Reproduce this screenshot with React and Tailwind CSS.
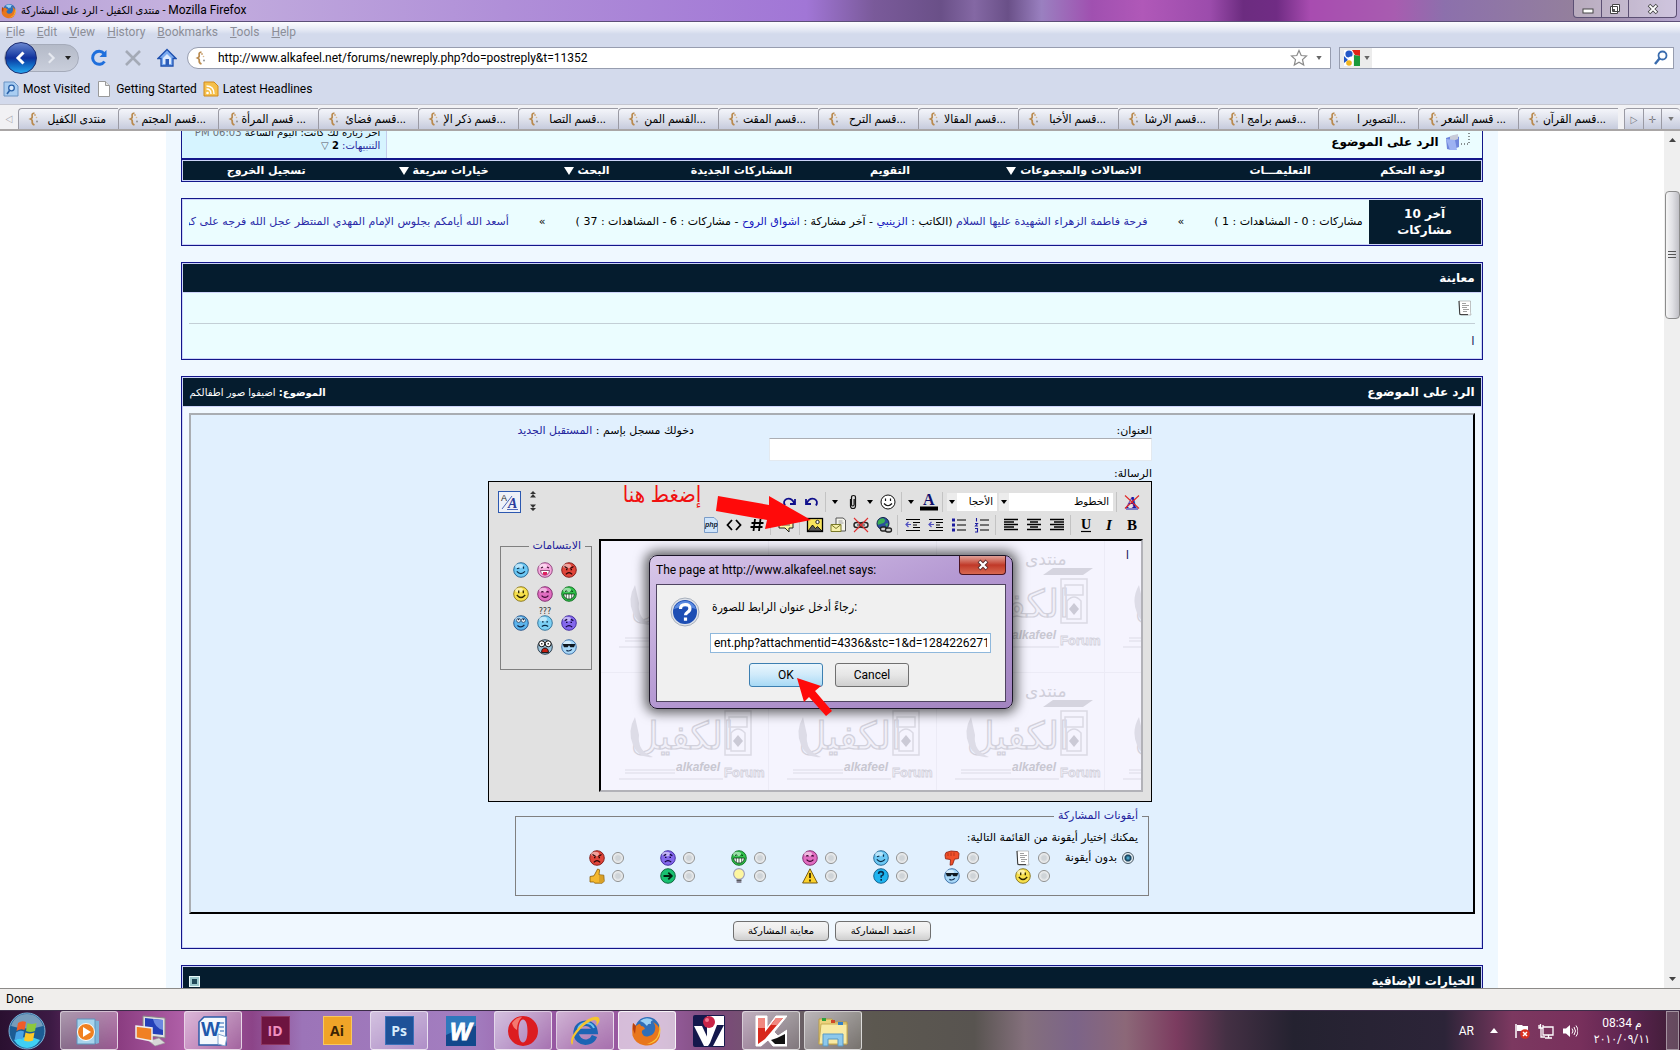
import React, { useState } from 'react';

const menus = ['File', 'Edit', 'View', 'History', 'Bookmarks', 'Tools', 'Help'];

const tabs = [
  'منتدى الكفيل',
  'قسم المجتم...',
  'قسم المرأة ...',
  'قسم فضائ...',
  'قسم ذكر الإ...',
  'قسم التصا...',
  'القسم المن...',
  'قسم المقت...',
  'قسم الترح...',
  'قسم المقالا...',
  'قسم الأخبا...',
  'قسم الارشا...',
  'قسم برامج ا...',
  'التصوير ا...',
  'قسم الشعر ...',
  'قسم القرآن...',
];

const navItems = [
  { label: 'لوحة التحكم' },
  { label: 'التعليمـــات' },
  { label: 'الاتصالات والمجموعات', menu: true },
  { label: 'التقويم' },
  { label: 'المشاركات الجديدة' },
  { label: 'البحث', menu: true },
  { label: 'خيارات سريعة', menu: true },
  { label: 'تسجيل الخروج' },
];

/* ---------- Smileys and post icons ---------- */

const faces = {
  angry: { fill: '#e0453a', edge: '#7c1512' },
  tongue: { fill: '#f5a8dc', edge: '#8a3c78' },
  wink: { fill: '#6cc8f4', edge: '#1d5f8c' },
  grin: { fill: '#2fc24a', edge: '#0c6a1e' },
  blush: { fill: '#e06cc0', edge: '#7a2468' },
  smile: { fill: '#f7e04c', edge: '#83701a' },
  sad: { fill: '#8468ec', edge: '#3a2498' },
  confused: { fill: '#7cd0f4', edge: '#2c6c94' },
  roll: { fill: '#5cb4ec', edge: '#1c4c84' },
  cool: { fill: '#a8d8f8', edge: '#3468a0' },
  shock: { fill: '#9cc4dc', edge: '#203040' },
};

const Smiley = ({ type }) => {
  const { fill, edge } = faces[type];
  return (
    <svg viewBox="0 0 16 16" className="w-4 h-4 shrink-0" fill="none">
      <circle cx="8" cy="8" r="7.3" fill={fill} stroke={edge} strokeWidth="0.9" />
      <ellipse cx="6" cy="4" rx="4" ry="2.3" fill="#fff" opacity="0.5" />
      {type === 'angry' && (
        <path d="M3.5 4.5l3.2 2M12.5 4.5l-3.2 2M5 7.6h1.4M9.6 7.6H11M4.8 12.3q3.2-3.4 6.4 0" stroke="#2c0606" strokeWidth="1.2" />
      )}
      {type === 'tongue' && (
        <>
          <path d="M4 6l2-1M12 6l-2-1" stroke="#401030" strokeWidth="1.2" />
          <path d="M3.5 8.5h9q-.8 4.5-4.5 4.5T3.5 8.5z" fill="#fff" stroke="#602048" strokeWidth="0.7" />
          <path d="M6 10h4v2.500q-2 1.500-4 0z" fill="#e02060" />
        </>
      )}
      {type === 'wink' && (
        <path d="M4 6.8l2.4-.8M10.5 4.6v2.2M3.8 9.4q4 4.4 8.2 0" stroke="#0b2c48" strokeWidth="1.2" />
      )}
      {type === 'grin' && (
        <>
          <path d="M4 5.6q1.2-1.4 2.4 0M9.6 5.6q1.2-1.4 2.4 0" stroke="#063010" strokeWidth="1" />
          <path d="M2.6 8h10.8q-.6 5.2-5.4 5.2T2.6 8z" fill="#fff" stroke="#063010" strokeWidth="0.8" />
          <path d="M5.3 8v4.4M8 8v5M10.7 8v4.4" stroke="#063010" strokeWidth="0.7" />
        </>
      )}
      {type === 'blush' && (
        <path d="M4.3 6.4q1-1.6 2.2 0M9.5 6.4q1-1.6 2.2 0M4.6 9.6q3.4 3.6 6.8 0" stroke="#3a0630" strokeWidth="1.2" />
      )}
      {type === 'smile' && (
        <path d="M5.7 4.6v2.6M10.3 4.6v2.6M3.8 9q4.2 5 8.4 0" stroke="#2e2600" strokeWidth="1.3" />
      )}
      {type === 'sad' && (
        <path d="M3.6 5.6l2.6-1.2M12.4 5.6L9.8 4.4M5 7.4h1.5M9.5 7.4H11M4.8 12.2q3.2-3.2 6.4 0" stroke="#120640" strokeWidth="1.2" />
      )}
      {type === 'confused' && (
        <path d="M5 6.8h1.6M9.4 6.8H11M4.8 11.4q3.2-2 6.4 0" stroke="#0b2c48" strokeWidth="1.2" />
      )}
      {type === 'roll' && (
        <>
          <circle cx="5.6" cy="5.4" r="2" fill="#fff" stroke="#102848" strokeWidth="0.7" />
          <circle cx="10.4" cy="5.4" r="2" fill="#fff" stroke="#102848" strokeWidth="0.7" />
          <path d="M5.6 4v1.2M10.4 4v1.2M4.4 10.4q4 3 7-.6" stroke="#102848" strokeWidth="1.2" />
        </>
      )}
      {type === 'cool' && (
        <>
          <path d="M1.6 5h12.8l-1.4 3.2H9.4L8 6.2 6.6 8.2H3z" fill="#101820" />
          <path d="M5.4 11.4q3 1.6 5.4-1" stroke="#102848" strokeWidth="1.2" />
        </>
      )}
      {type === 'shock' && (
        <>
          <circle cx="4.8" cy="4.8" r="3" fill="#fff" stroke="#111" strokeWidth="1" />
          <circle cx="11.2" cy="4.8" r="3" fill="#fff" stroke="#111" strokeWidth="1" />
          <path d="M4.8 4v1.6M11.2 4v1.6" stroke="#111" strokeWidth="1.2" />
          <path d="M4.6 13.6q0-4.6 3.4-4.6t3.4 4.6z" fill="#c81e10" stroke="#111" strokeWidth="1" />
        </>
      )}
    </svg>
  );
};

const PageIcon = () => (
  <svg viewBox="0 0 16 16" className="w-4 h-4 shrink-0" fill="none">
    <path d="M2 1h11.5v11.5L14 15H4L2.5 13z" fill="#fff" stroke="#9a9a9a" strokeWidth="0.6" />
    <path d="M2 1l.8 13.6H11" stroke="#222" strokeWidth="0.9" />
    <path d="M5 3.5h4M5 5.5h7M5 7.5h5M6 9.5h6M6 11.5h4" stroke="#888" strokeWidth="0.8" />
  </svg>
);

const ThumbIcon = ({ down }) => (
  <svg viewBox="0 0 16 16" className="w-4 h-4 shrink-0">
    <path
      d={
        down
          ? 'M2 2.5L7 1l6.5.6 1.5 2-.5 5-4 .6-2 5.6-2.4.4.4-5.6L1.5 8.8 1 5z'
          : 'M1 8.5l4-.7L8.6 1l2 .8-.6 5 4.8.4.4 6-2 2H6l-1.6-1.2H1z'
      }
      fill={down ? '#f0502a' : '#f4b82e'}
      stroke={down ? '#8c1c0a' : '#8a5c06'}
      strokeWidth="0.8"
    />
    <path
      d={down ? 'M4 3v3M7 2.5V6M10 2.5V6' : 'M10 9h4.6M10 11h4.6M10 13h4'}
      stroke={down ? '#a02c14' : '#a8741a'}
      strokeWidth="0.7"
    />
  </svg>
);

const QuestionIcon = () => (
  <svg viewBox="0 0 16 16" className="w-4 h-4 shrink-0">
    <circle cx="8" cy="8" r="7.3" fill="#1eb4f0" stroke="#0c5884" strokeWidth="0.9" />
    <path d="M5.6 6q0-2.4 2.4-2.4T10.4 6Q10.4 7.2 8.2 8v1.8M8.2 11v1.8" stroke="#083050" strokeWidth="1.6" fill="none" />
  </svg>
);

const WarningIcon = () => (
  <svg viewBox="0 0 16 16" className="w-4 h-4 shrink-0">
    <path d="M8 .8L15.4 15H.6z" fill="#fcd22c" stroke="#6a4c08" strokeWidth="0.9" strokeLinejoin="round" />
    <path d="M8 5v5M8 11.6v1.8" stroke="#201800" strokeWidth="1.6" />
  </svg>
);

const BulbIcon = () => (
  <svg viewBox="0 0 16 16" className="w-4 h-4 shrink-0">
    <circle cx="8" cy="6" r="5.4" fill="#fdf6a0" stroke="#9a9ab8" strokeWidth="1.1" />
    <path d="M5.6 11h4.8v4H5.6z" fill="#8c8c9c" />
    <path d="M5.6 12.6h4.8" stroke="#444" strokeWidth="0.8" />
  </svg>
);

const GoIcon = () => (
  <svg viewBox="0 0 16 16" className="w-4 h-4 shrink-0">
    <circle cx="8" cy="8" r="7.3" fill="#18c070" stroke="#0a5c34" strokeWidth="0.9" />
    <path d="M3.5 8h8M8.3 4.6L11.8 8l-3.5 3.4" stroke="#022010" strokeWidth="1.8" fill="none" />
  </svg>
);

/* ---------- Browser chrome ---------- */

const SiteIcon = () => (
  <svg viewBox="0 0 14 14" className="w-3.5 h-3.5 shrink-0" fill="none">
    <path d="M7.5 1Q4.500 1.500 5.200 4.400 5.600 6 3.500 7q2.300 1 1.700 3Q5 12 7.500 13" stroke="#b98a4e" strokeWidth="1.7" />
    <circle cx="8" cy="3" r="0.9" fill="#c8a070" />
    <circle cx="9.500" cy="5.500" r="0.8" fill="#d9b98c" />
    <circle cx="10" cy="9.500" r="0.9" fill="#8a8a8a" />
  </svg>
);

const FirefoxIcon = ({ className }) => (
  <svg viewBox="0 0 32 32" className={className}>
    <circle cx="16.500" cy="14.500" r="12.500" fill="#2f6fb8" />
    <path d="M9 6q6-5 13-1-3 1-2 4-3-1-4 2-3-4-7-5z" fill="#9ad0f4" />
    <path d="M2 8l3 3q2-2 4-2l1 2q3 0 4 3-4 1-3 4 2 5 7 3 5-1 6-6 1-5-2-8 6 3 7 9 1 7-4 11.500-6 4.500-13 2.500-8-2-10.500-9.500Q.5 14 2 8z" fill="#e8761c" />
    <path d="M28 9q3 6 0 12-4 8-12 8 9-3 11-9 2-5 1-11z" fill="#fbc93a" />
    <path d="M2 8l3 3-1 8q-3-5-2-11z" fill="#b8400e" />
  </svg>
);

const TitleBar = () => (
  <header className="flex items-center h-[22px] shrink-0 pl-px border-b border-[#5c4f78] bg-[linear-gradient(90deg,#b7a2d6_0%,#c4b0de_10%,#b08fd8_30%,#a176d6_48%,#7a5a9a_52%,#6a5088_56%,#8468a4_58%,#6a5088_60%,#9a80c0_62%,#a050b0_65%,#b058b8_68%,#9c4cac_72%,#6c2c80_74%,#702c84_76%,#a84cb0_78%,#a85cb0_83%,#8c70ac_86%,#94809c_94%,#b7a8d0_100%)]">
    <FirefoxIcon className="w-4 h-4 mr-1" />
    <h1 className="text-[11px] leading-5 text-black">
      منتدى الكفيل - الرد على المشاركة - <span className="text-[12px]">Mozilla Firefox</span>
    </h1>
    <div className="ml-auto mr-[3px] self-start flex h-[18px] rounded-b border border-t-0 border-[#5c5074] bg-white/35 divide-x divide-[#5c5074]">
      <button type="button" aria-label="Minimize" className="w-[28px] flex items-center justify-center">
        <svg viewBox="0 0 12 10" className="w-3 h-2.5"><rect x="1" y="5" width="10" height="4" fill="#fff" stroke="#444" /></svg>
      </button>
      <button type="button" aria-label="Restore" className="w-[27px] flex items-center justify-center">
        <svg viewBox="0 0 12 12" className="w-3 h-3"><path d="M3.5 1.5h7v7h-7zM1.5 3.5h7v7h-7z" fill="#fff" stroke="#444" /><path d="M4 6h2v2H4z" fill="#555" /></svg>
      </button>
      <button type="button" aria-label="Close" className="w-[47px] flex items-center justify-center">
        <svg viewBox="0 0 12 12" className="w-3 h-3"><path d="M2 2l8 8M10 2l-8 8" stroke="#444" strokeWidth="3.6" /><path d="M2.5 2.5l7 7M9.5 2.5l-7 7" stroke="#fff" strokeWidth="1.8" /></svg>
      </button>
    </div>
  </header>
);

const NavigationBar = () => (
  <div className="flex items-center h-8 px-1 pr-[6px]">
    <div className="flex items-center w-[75px] h-7 rounded-full bg-gradient-to-b from-[#b4bac8] to-[#c9cedb] border border-[#a5abba]">
      <button type="button" aria-label="Back" className="w-8 h-8 shrink-0 rounded-full border border-[#1c2c70] bg-gradient-to-b from-[#6a86d0] via-[#10309c] to-[#28a8f0] flex items-center justify-center">
        <svg viewBox="0 0 16 16" className="w-4 h-4"><path d="M10.5 2.5L5 8l5.5 5.5" stroke="#fff" strokeWidth="3" fill="none" /></svg>
      </button>
      <button type="button" aria-label="Forward" className="flex-1 flex items-center justify-center">
        <svg viewBox="0 0 16 16" className="w-3.5 h-3.5"><path d="M5.5 2.5L11 8l-5.5 5.5" stroke="#e6e9f0" strokeWidth="2.5" fill="none" /></svg>
      </button>
      <svg viewBox="0 0 8 6" className="w-2 h-1.5 mr-1.5"><path d="M1 1h6L4 5z" fill="#222" /></svg>
    </div>
    <button type="button" aria-label="Reload" className="ml-2.5">
      <svg viewBox="0 0 20 20" className="w-5 h-5"><path d="M15.5 13.500A6.500 6.500 0 1 1 15 5.500" stroke="#1f6fdc" strokeWidth="3" fill="none" /><path d="M17.500 2v7h-7z" fill="#1f6fdc" /></svg>
    </button>
    <button type="button" aria-label="Stop" className="ml-3.5">
      <svg viewBox="0 0 20 20" className="w-5 h-5"><path d="M3 3l14 14M17 3L3 17" stroke="#a4aab6" strokeWidth="2.6" /></svg>
    </button>
    <button type="button" aria-label="Home" className="ml-3.5">
      <svg viewBox="0 0 20 20" className="w-5 h-5"><path d="M10 1.5L1 10.5h3V18h12v-7.500h3z" fill="#7aaaf0" stroke="#1d4fae" strokeWidth="1.3" /><path d="M6 10l4-4 4 4v6H6z" fill="#dce9fc" /><path d="M8.5 11h3.500v6H8.500z" fill="#2c5cb8" /></svg>
    </button>
    <div className="flex-1 flex items-center h-[22px] ml-2.5 pl-1.5 bg-white border border-[#979daf] rounded-l-full">
      <SiteIcon />
      <input
        aria-label="Location"
        defaultValue="http://www.alkafeel.net/forums/newreply.php?do=postreply&t=11352"
        className="flex-1 ml-2.5 text-[12px] leading-5 text-black outline-none bg-transparent"
      />
      <svg viewBox="0 0 18 18" className="w-[18px] h-[18px]"><path d="M9 1.5l2.2 5 5.300.5-4 3.600 1.200 5.400L9 13.200 4.300 16l1.200-5.400-4-3.600 5.300-.5z" fill="#fff" stroke="#8a8a8a" strokeWidth="1.2" /></svg>
      <svg viewBox="0 0 8 6" className="w-1.5 h-1 mx-2"><path d="M0 0h8L4 6z" fill="#666" /></svg>
    </div>
    <div className="w-[335px] flex items-center h-[22px] ml-2 bg-white border border-[#979daf]">
      <div className="flex items-center h-full w-8 pl-1 bg-[#ececec]">
        <svg viewBox="0 0 16 16" className="w-4 h-4">
          <path d="M0 0h9v16H0z" fill="#fff" />
          <path d="M8 0h8v6l-5-1z" fill="#e02418" />
          <path d="M10 5l6 1v10h-6z" fill="#1a9a3c" />
          <circle cx="5" cy="4" r="3.6" fill="#2458c8" />
          <path d="M0 6l4 4-4 3z" fill="#2458c8" />
          <circle cx="7" cy="9" r="2.6" fill="#fff" />
          <circle cx="5" cy="13" r="2.8" fill="#f0b420" />
        </svg>
        <svg viewBox="0 0 8 6" className="w-1.5 h-1 ml-1"><path d="M0 0h8L4 6z" fill="#666" /></svg>
      </div>
      <input aria-label="Search" className="flex-1 outline-none bg-transparent text-[12px]" />
      <svg viewBox="0 0 16 16" className="w-4 h-4 mr-1"><circle cx="9.5" cy="5.5" r="4" fill="none" stroke="#3a6cae" strokeWidth="1.8" /><path d="M6.5 8.5L2 14" stroke="#3a6cae" strokeWidth="2.4" /></svg>
    </div>
  </div>
);

const BookmarksBar = () => (
  <div className="flex items-center h-[30px] pl-[3px] text-[12px] text-black">
    <a href="#visited" className="flex items-center gap-1">
      <svg viewBox="0 0 16 16" className="w-4 h-4"><path d="M1 1h10l4 4v10H1z" fill="#a9cdf2" stroke="#6a94c4" /><circle cx="8.5" cy="7" r="2.8" fill="#dbeafb" stroke="#2860a8" strokeWidth="1.3" /><path d="M6.5 9.5L4 13" stroke="#2860a8" strokeWidth="1.6" /></svg>
      Most Visited
    </a>
    <a href="#started" className="flex items-center gap-1 ml-1.5">
      <svg viewBox="0 0 16 16" className="w-4 h-4"><path d="M2.5.5h7l4 4v11h-11z" fill="#fff" stroke="#9a9a9a" /><path d="M9.5.5v4h4" fill="#e4e4e4" stroke="#9a9a9a" /></svg>
      Getting Started
    </a>
    <a href="#headlines" className="flex items-center gap-1 ml-1.5">
      <svg viewBox="0 0 16 16" className="w-4 h-4"><path d="M1 1h10l4 4v10H1z" fill="#f5c04c" stroke="#d08a1c" /><circle cx="4.5" cy="12" r="1.3" fill="#fff" /><path d="M3.5 8q4.500 0 4.500 5M3.500 5q7.500 0 7.500 8" stroke="#fff" strokeWidth="1.4" fill="none" /></svg>
      Latest Headlines
    </a>
  </div>
);

const stripButton = 'flex-1 flex items-center justify-center border-l border-[#9a9aa4]';

const TabStrip = () => (
  <div className="flex items-stretch h-[27px] pt-[3px] bg-[#f1f1f4] border-t border-[#c4c6d0] border-b-2 border-b-[#a9a6a6]">
    <button type="button" aria-label="Scroll left" className="w-[18px] shrink-0 text-[10px] text-[#a8a8b0]">◁</button>
    <div role="tablist" className="flex-1 flex min-w-0">
      {tabs.map((tab) => (
        <button
          key={tab}
          type="button"
          role="tab"
          className="flex-1 min-w-0 flex items-center pl-2 pr-3 border-l border-t border-[#9a9aa4] rounded-tl-sm bg-gradient-to-b from-[#f4f5fa] via-[#dfe2ec] via-50% to-[#c6cbdd]"
        >
          <SiteIcon />
          <span className="flex-1 text-right text-[12px] leading-5 text-black whitespace-nowrap">{tab}</span>
        </button>
      ))}
    </div>
    <div className="flex w-[56px] ml-1.5 shrink-0 rounded-t border-t border-[#9a9aa4] bg-gradient-to-b from-[#f4f5fa] to-[#c6cbdd] text-[10px] text-[#77777f]">
      <button type="button" aria-label="Scroll right" className={stripButton}>▷</button>
      <button type="button" aria-label="New tab" className={stripButton}>✛</button>
      <button type="button" aria-label="List tabs" className={stripButton}>
        <svg viewBox="0 0 8 6" className="w-1.5 h-1"><path d="M0 0h8L4 6z" fill="#777" /></svg>
      </button>
    </div>
  </div>
);

/* ---------- Forum page ---------- */

const Panel = ({ className = '', children }) => (
  <section className={`border border-[#13168a] bg-[#cdd3f8] p-px ${className}`}>{children}</section>
);

const PanelHeader = ({ title, children }) => (
  <div className="flex items-center justify-between h-7 px-1.5 mb-px bg-[#051c2e] text-white">
    <h2 className="text-[12px] font-bold">{title}</h2>
    {children}
  </div>
);

const Breadcrumb = () => (
  <div className="flex items-end justify-between h-7 border-x border-b border-[#13168a] bg-[#ebfdff] overflow-hidden">
    <div className="flex items-center gap-1.5 pr-[11px] pb-[7px]">
      <svg viewBox="0 0 26 18" className="w-[26px] h-[18px]">
        <path d="M24 0v11H13" stroke="#222" strokeDasharray="1 2" fill="none" />
        <path d="M1 5l9-3 4 2v10l-8 3-4-1z" fill="#6f86dc" />
        <path d="M5 3l8-2v5l-8 3z" fill="#c8ccd8" />
        <path d="M1 6l9 1 2 10H5z" fill="#9db2f2" />
      </svg>
      <span className="text-[12px] leading-4 font-bold text-black">الرد على الموضوع</span>
    </div>
    <div className="w-[205px] pt-1 pb-1.5 px-1.5 bg-[#d6f4ff] border-r border-[#c4ccec] text-[10px] leading-[13px] text-black whitespace-nowrap">
      <p>
        آخر زيارة لك كانت: اليوم الساعة <span className="text-[#6b7078]">06:03 PM</span>
      </p>
      <p>
        <a href="#alerts" className="text-[#22229c]">التنبيهات:</a> <b>2</b> <span className="text-[#556]">▽</span>
      </p>
    </div>
  </div>
);

const ForumNav = () => (
  <Panel>
    <nav className="table w-full h-[19px] bg-[#051c2e] text-white text-[11px] font-bold leading-[17px]">
      {navItems.map((item) => (
        <a key={item.label} href="#nav" className="table-cell text-center align-middle whitespace-nowrap">
          {item.label}
          {item.menu && (
            <svg viewBox="0 0 10 8" className="inline w-2.5 h-2 mr-1"><path d="M0 0h10L5 8z" fill="#fff" /></svg>
          )}
        </a>
      ))}
    </nav>
  </Panel>
);

const LatestPosts = () => (
  <Panel className="mt-4">
    <div className="flex h-11">
      <h2 className="w-28 shrink-0 flex items-center justify-center text-center bg-[#051c2e] text-white text-[12px] leading-4 font-bold">
        آخر 10
        <br />
        مشاركات
      </h2>
      <div className="flex-1 flex items-center px-1.5 bg-[#ebfdff]">
        <div className="flex-1 w-0 flex gap-[30px] overflow-hidden whitespace-nowrap text-[11px] leading-5 text-black">
          <span>مشاركات : 0 - المشاهدات : 1 )</span>
          <span>»</span>
          <span>
            <a href="#t1" className="text-[#2a2aa8]">فرحة فاطمة الزهراء الشهيدة عليها السلام</a> (الكاتب :{' '}
            <a href="#u1" className="text-[#1414c0]">الزينبي</a> - آخر مشاركة :{' '}
            <a href="#u2" className="text-[#1414c0]">اشواق الروح</a> - مشاركات : 6 - المشاهدات : 37 )
          </span>
          <span>»</span>
          <a href="#t2" className="text-[#2a2aa8]">أسعد الله أيامكم بجلوس الإمام المهدي المنتظر عجل الله فرجه على كرس</a>
        </div>
      </div>
    </div>
  </Panel>
);

const Preview = () => (
  <Panel className="mt-4">
    <PanelHeader title="معاينة" />
    <div className="px-1.5 bg-[#ebfdff]">
      <div className="flex items-center h-[31px] px-0.5 border-b border-[#c3cfd6]">
        <PageIcon />
      </div>
      <p className="h-[34px] text-[12px] leading-[34px] text-[#22225c]">ا</p>
    </div>
  </Panel>
);

const Separator = () => <span className="w-px h-5 mr-[3px] ml-[2px] bg-[#c3c3c3]" />;

const Tool = ({ label, children }) => (
  <button type="button" aria-label={label} className="w-[23px] h-[23px] flex items-center justify-center">
    <svg viewBox="0 0 18 18" className="w-[18px] h-[18px] [direction:ltr]" fill="none">{children}</svg>
  </button>
);

const Caret = ({ label }) => (
  <button type="button" aria-label={label} className="w-3 h-[23px] flex items-center justify-center">
    <svg viewBox="0 0 6 4" className="w-1.5 h-1"><path d="M0 0h6L3 4z" fill="#000" /></svg>
  </button>
);

const ToolSelect = ({ label, value, width }) => (
  <div className={`flex items-center h-[18px] mx-px bg-white ${width}`}>
    <select aria-label={label} className="flex-1 min-w-0 appearance-none pr-1 text-[10px] leading-[18px] text-black bg-transparent outline-none">
      <option>{value}</option>
    </select>
    <span className="w-[10px] h-full flex items-center justify-center bg-[#ececec]">
      <svg viewBox="0 0 6 4" className="w-1.5 h-1"><path d="M0 0h6L3 4z" fill="#000" /></svg>
    </span>
  </div>
);

const EditorToolbar = () => (
  <div className="flex">
    <div className="flex-1 pr-2">
      <div className="flex items-center h-[23px]">
        <Tool label="إزالة التنسيق">
          <text x="3" y="15" fontFamily="Liberation Serif" fontSize="17" fontStyle="italic" fontWeight="bold" fill="#1a1aa8">A</text>
          <path d="M2 2.5l14 13M16 2.5l-14 13" stroke="#e02828" strokeWidth="1.1" />
          <path d="M3 16h12" stroke="#1a1aa8" />
        </Tool>
        <Separator />
        <ToolSelect label="الخطوط" value="الخطوط" width="w-[114px]" />
        <ToolSelect label="الأحجام" value="الأحجا" width="w-[50px]" />
        <Separator />
        <Tool label="لون الخط">
          <text x="3" y="12" fontFamily="Liberation Serif" fontSize="16" fontWeight="bold" fill="#10106c">A</text>
          <path d="M0 13.5h18v4H0z" fill="#000" />
        </Tool>
        <Caret label="الألوان" />
        <Separator />
        <Tool label="ابتسامات">
          <circle cx="9" cy="9" r="7" fill="#fff" stroke="#111" />
          <path d="M6.5 5.5v2.500M11.500 5.500v2.500M5 10.500q4 4.500 8 0" stroke="#111" strokeWidth="1.2" />
        </Tool>
        <Caret label="المزيد" />
        <Tool label="مرفقات">
          <path d="M6.5 6v7q0 2.500 2.500 2.500t2.500-2.500V4.500q0-2-2-2t-2 2v7q0 1.500 1.300 1.500t1.300-1.500V6" stroke="#111" strokeWidth="1.2" />
        </Tool>
        <Caret label="إدارة المرفقات" />
        <Separator />
        <Tool label="تراجع">
          <path d="M3 6v5h5M3.5 10.500q3-6 8-4.500 4 2 1.500 6.500" stroke="#10108c" strokeWidth="1.8" />
        </Tool>
        <Tool label="إعادة">
          <path d="M15 6v5h-5M14.5 10.500q-3-6-8-4.500-4 2-1.500 6.500" stroke="#10108c" strokeWidth="1.8" />
        </Tool>
      </div>
      <div className="flex items-center h-[23px]">
        <Tool label="عريض">
          <text x="4" y="14" fontFamily="Liberation Serif" fontSize="15" fontWeight="bold" fill="#000">B</text>
        </Tool>
        <Tool label="مائل">
          <text x="6" y="14" fontFamily="Liberation Serif" fontSize="15" fontWeight="bold" fontStyle="italic" fill="#000">I</text>
        </Tool>
        <Tool label="تحته خط">
          <text x="4" y="13" fontFamily="Liberation Serif" fontSize="14" fontWeight="bold" fill="#000">U</text>
          <path d="M4 15.5h10" stroke="#000" strokeWidth="1.2" />
        </Tool>
        <Separator />
        <Tool label="محاذاة لليمين">
          <path d="M2 3.5h14M6 6h10M2 8.5h14M6 11h10M2 13.5h14" stroke="#000" strokeWidth="1.3" />
        </Tool>
        <Tool label="توسيط">
          <path d="M2 3.5h14M5 6h8M2 8.5h14M5 11h8M2 13.5h14" stroke="#000" strokeWidth="1.3" />
        </Tool>
        <Tool label="محاذاة لليسار">
          <path d="M2 3.5h14M2 6h10M2 8.5h14M2 11h10M2 13.5h14" stroke="#000" strokeWidth="1.3" />
        </Tool>
        <Separator />
        <Tool label="قائمة مرقمة">
          <path d="M7 4h9M7 9h9M7 14h9" stroke="#000" />
          <path d="M3.5 2v3.500M2 7.500h2.500L2.500 10h2.500M2 12.500h2.500V16H2" stroke="#1c1ca0" strokeWidth="1.1" />
        </Tool>
        <Tool label="قائمة نقطية">
          <path d="M7 4h9M7 9h9M7 14h9" stroke="#000" />
          <path d="M2 2.5h3v3H2zM2 7.5h3v3H2zM2 12.5h3v3H2z" fill="#1c1ca0" />
        </Tool>
        <Tool label="زيادة المسافة">
          <path d="M2 3.5h14M9 6.5h7M9 9h4M9 11.5h7M2 14.5h14" stroke="#000" strokeWidth="1.2" />
          <path d="M7 8.500H2M4.500 6L2 8.500 4.500 11" stroke="#5050c0" strokeWidth="1.2" />
        </Tool>
        <Tool label="إنقاص المسافة">
          <path d="M2 3.5h14M9 6.5h7M9 9h4M9 11.5h7M2 14.5h14" stroke="#000" strokeWidth="1.2" />
          <path d="M7 8.500H2M4.500 6L2 8.500 4.500 11" stroke="#5050c0" strokeWidth="1.2" />
        </Tool>
        <Separator />
        <Tool label="إدراج رابط">
          <circle cx="8" cy="7.5" r="6" fill="#2a4e9c" stroke="#0c1c48" />
          <path d="M5 3q4-2 5 1 0 3-3 3.500T3 9Q1.500 5 5 3zM10 8l3-1-1 4z" fill="#3cb054" />
          <rect x="5.5" y="11" width="6" height="4" rx="2" stroke="#222" strokeWidth="1.3" fill="#ccc" />
          <rect x="10.5" y="12" width="6" height="4" rx="2" stroke="#222" strokeWidth="1.3" fill="#ccc" />
        </Tool>
        <Tool label="إزالة الرابط">
          <rect x="2" y="6.5" width="7" height="5" rx="2.5" stroke="#222" strokeWidth="1.4" />
          <rect x="8" y="6.5" width="8" height="5" rx="2.5" stroke="#222" strokeWidth="1.4" />
          <path d="M5 9h8" stroke="#222" />
          <path d="M2 2l14 14M16 2L2 16" stroke="#e03030" strokeWidth="1.1" />
        </Tool>
        <Tool label="بريد">
          <path d="M7 2h7l2.500 2v11H7z" fill="#f4f4ec" stroke="#555" />
          <path d="M9.500 5h4M9.500 7h5" stroke="#888" strokeWidth="0.8" />
          <path d="M2 8.500h10v7H2z" fill="#f6f0a8" stroke="#7a7a28" />
          <path d="M2 8.500l5 4 5-4" stroke="#7a7a28" />
        </Tool>
        <Tool label="إدراج صورة">
          <rect x="1.5" y="2.5" width="15" height="13" fill="#f8e45c" stroke="#000" strokeWidth="1.3" />
          <circle cx="11.5" cy="6" r="1.7" stroke="#222" fill="#fff" />
          <path d="M2 15l4.500-6 3 3.500 2-2L16 15z" fill="#555" stroke="#000" strokeWidth="0.8" />
        </Tool>
        <Separator />
        <Tool label="اقتباس">
          <path d="M2 3h14v9h-4v4l-4-4H2z" fill="#fcf4a0" stroke="#222" />
          <path d="M5 6h8M5 9h8" stroke="#555" />
        </Tool>
        <Separator />
        <Tool label="كود">
          <path d="M7 3L5.500 15M12.500 3L11 15M3.500 7h12M2.500 11h12" stroke="#000" strokeWidth="1.8" />
        </Tool>
        <Tool label="HTML">
          <path d="M7 4L2.500 9 7 14M11 4l4.500 5-4.500 5" stroke="#000" strokeWidth="1.8" />
        </Tool>
        <Tool label="PHP">
          <path d="M2.500 1.500H12L15.500 5v11.500h-13z" fill="#cfe4fa" stroke="#7a9cc8" />
          <text x="3" y="11" fontFamily="Liberation Sans" fontSize="7" fontWeight="bold" fontStyle="italic" fill="#112233">php</text>
        </Tool>
      </div>
    </div>
    <div className="flex items-start gap-2 pl-[9px] pt-px">
      <div className="flex flex-col gap-1">
        <button type="button" aria-label="تصغير"><svg viewBox="0 0 8 8" className="w-2 h-2"><path d="M4 0l3 3H1zM4 3l3 3.500H1z" fill="#333" /></svg></button>
        <button type="button" aria-label="تكبير"><svg viewBox="0 0 8 8" className="w-2 h-2"><path d="M4 8L1 5h6zM4 5L1 1.500h6z" fill="#333" /></svg></button>
      </div>
      <button type="button" aria-label="نوع المحرر" className="w-[23px] h-[22px] bg-[#eef1f8] border border-[#2c58b0] flex items-center justify-center">
        <svg viewBox="0 0 20 18" className="w-5 h-[18px] [direction:ltr]">
          <text x="1" y="8" fontFamily="Liberation Sans" fontSize="9" fill="#222">A</text>
          <text x="8" y="15" fontFamily="Liberation Serif" fontSize="14" fontWeight="bold" fontStyle="italic" fill="#2a3c9c">A</text>
          <path d="M2 16L12 3M7 16.500h11" stroke="#3c58b0" strokeWidth="0.9" />
        </svg>
      </button>
    </div>
  </div>
);

const Watermark = () => (
  <svg viewBox="0 0 168 132" className="w-[168px] h-[132px] shrink-0 [direction:ltr]" fill="none">
    <path d="M167.5 0v132M0 131.5h168" stroke="#ecebf6" />
    <text x="88" y="24" fontFamily="DejaVu Sans" fontSize="17" fill="#d0cfda">منتدى</text>
    <text x="30" y="76" fontFamily="DejaVu Sans" fontSize="38" fill="#f1f0f9" stroke="#d2d1dc" strokeWidth="1.2">الكفيل</text>
    <text x="75" y="98" fontFamily="Liberation Sans" fontSize="12" fontWeight="bold" fontStyle="italic" fill="#c8c7d1">alkafeel</text>
    <text x="123" y="104" fontFamily="Liberation Sans" fontSize="13" fontWeight="bold" fill="#f3f2fa" stroke="#d2d1dc" strokeWidth="0.8">Forum</text>
    <path d="M106 34l10-7h40l-10 7z" fill="#d5d4df" />
    <path d="M124 38h26v44h-26zM128 44h18v10h-18zM130 60q7-8 14 0v18h-14z" stroke="#dad9e4" strokeWidth="1.5" />
    <path d="M137 62l5 6-5 6-5-6z" fill="#cbcad6" />
    <path d="M24 97h50M24 100h50M18 106h104" stroke="#dcdbe6" />
    <path d="M34 44q-8 14-2 28t20 12q-16-6-14-22z" fill="#dddce7" />
  </svg>
);

const smileyRows = [
  { types: ['angry', 'tongue', 'wink'], height: 'h-6' },
  { types: ['grin', 'blush', 'smile'], height: 'h-6' },
  { types: ['sad', 'confused', 'roll'], height: 'h-[29px]' },
  { types: ['cool', 'shock'], height: 'h-6' },
];

const Editor = () => (
  <div className="w-[664px] border border-black bg-[#e1e1e1] pt-2 pb-[9px]">
    <EditorToolbar />
    <div className="flex items-start gap-[7px] mt-[3px] pr-2 pl-[11px]">
      <div className="flex-1 grid h-[253px] border-2 border-t-black border-l-black border-r-[#b2b2b8] border-b-[#b2b2b8] bg-[#f5f4fe] overflow-hidden">
        <div className="[grid-area:1/1] w-0 min-w-full h-[249px] overflow-hidden" dir="ltr">
          {[0, 1].map((row) => (
            <div key={row} className="flex">
              {[0, 1, 2, 3].map((col) => (
                <Watermark key={col} />
              ))}
            </div>
          ))}
        </div>
        <textarea
          id="message"
          defaultValue="ا"
          className="[grid-area:1/1] relative resize-none bg-transparent outline-none px-3 py-1.5 text-[12px] leading-4 text-[#22225c]"
        />
      </div>
      <fieldset className="w-[92px] h-[131px] border border-[#808080] pt-px pr-3.5 text-[11px]">
        <legend className="-mr-2 px-1 leading-[14px] text-[#22229c]">الابتسامات</legend>
        {smileyRows.map((row) => (
          <div key={row.types[0]} className={`flex gap-2 items-end ${row.height}`}>
            {row.types.map((type) => (
              <button key={type} type="button" aria-label={type} className="relative">
                {type === 'confused' && (
                  <span className="absolute -top-2 inset-x-0 text-center text-[8px] leading-[10px] text-[#333]">???</span>
                )}
                <Smiley type={type} />
              </button>
            ))}
          </div>
        ))}
      </fieldset>
    </div>
  </div>
);

const postIcons = [
  <PageIcon />,
  <ThumbIcon down />,
  <Smiley type="wink" />,
  <Smiley type="blush" />,
  <Smiley type="grin" />,
  <Smiley type="sad" />,
  <Smiley type="angry" />,
  <Smiley type="smile" />,
  <Smiley type="cool" />,
  <QuestionIcon />,
  <WarningIcon />,
  <BulbIcon />,
  <GoIcon />,
  <ThumbIcon />,
];

const radioStyle =
  'appearance-none w-3 h-3 shrink-0 rounded-full border border-[#8e8f8f] bg-[radial-gradient(circle,#cfd4d8_30%,#f6f6f6_75%)] checked:border-[#4a5a66] checked:bg-[radial-gradient(circle,#58c4ec_0%,#123c58_40%,#e8f0f4_60%)]';

const PostIcons = ({ selected, onSelect }) => (
  <fieldset className="mt-[7px] mx-[3px] border border-[#808080] pt-2 pb-2.5 px-2.5 text-[11px] leading-[14px] text-black">
    <legend className="-mr-1 px-1 text-[#22229c]">أيقونات المشاركة</legend>
    <p>يمكنك إختيار أيقونة من القائمة التالية:</p>
    <div className="flex mt-1">
      <label className="w-[88px] h-[18px] flex items-center gap-[5px] pr-1 whitespace-nowrap">
        <input type="radio" name="icon" checked={selected === -1} onChange={() => onSelect(-1)} className={radioStyle} />
        بدون أيقونة
      </label>
      <div className="grid grid-cols-[repeat(7,71px)]">
        {postIcons.map((icon, i) => (
          <label key={i} className="h-[18px] flex items-center gap-[7px]">
            <input type="radio" name="icon" checked={selected === i} onChange={() => onSelect(i)} className={radioStyle} />
            {icon}
          </label>
        ))}
      </div>
    </div>
  </fieldset>
);

const submitStyle =
  'w-24 h-5 rounded-sm border border-[#707070] bg-gradient-to-b from-[#f4f4f4] via-[#ebebeb] to-[#cfcfcf] text-[10px] leading-4 text-black';

const ReplyForm = () => {
  const [icon, setIcon] = useState(-1);

  return (
    <Panel className="mt-4">
      <PanelHeader title="الرد على الموضوع">
        <span className="text-[10px]">
          <b>الموضوع:</b> اضيفوا صور اطفالكم
        </span>
      </PanelHeader>
      <form onSubmit={(e) => e.preventDefault()} className="p-1.5 bg-[#f0f8ff]">
        <div className="pt-[9px] pb-4 bg-[#e1f0fe] border-2 border-t-[#a9adb2] border-l-[#a9adb2] border-r-black border-b-black">
          <div className="w-[640px] mx-auto text-[11px] leading-[14px] text-black">
            <div className="flex justify-between">
              <div>
                <label htmlFor="title" className="block">العنوان:</label>
                <input id="title" className="block w-[383px] h-[23px] px-1 bg-white border border-[#e3e9ef] border-t-[#abadb3] text-[12px] outline-none" />
              </div>
              <p className="w-[182px] whitespace-nowrap">
                دخولك مسجل بإسم : <a href="#user" className="text-[#22229c]">المستقبل الجديد</a>
              </p>
            </div>
            <label htmlFor="message" className="block mt-[6px]">الرسالة:</label>
            <Editor />
            <PostIcons selected={icon} onSelect={setIcon} />
          </div>
        </div>
        <div className="flex justify-center gap-1.5 pt-[7px]">
          <button type="submit" className={submitStyle}>اعتمد المشاركة</button>
          <button type="button" className={submitStyle}>معاينة المشاركة</button>
        </div>
      </form>
    </Panel>
  );
};

const Scrollbar = () => (
  <div className="w-4 shrink-0 flex flex-col items-center bg-[#efefef]" aria-hidden="true">
    <svg viewBox="0 0 16 18" className="w-4 h-[18px]"><path d="M5 11h7L8.500 7z" fill="#444" /></svg>
    <div className="w-[15px] h-32 mt-[42px] flex items-center justify-center rounded-sm border border-[#8c8c8c] bg-gradient-to-r from-[#f6f6f6] via-[#e0e0e4] to-[#c0c0c6]">
      <svg viewBox="0 0 8 10" className="w-2 h-2.5"><path d="M0 1.5h8M0 4.5h8M0 7.5h8" stroke="#555" /></svg>
    </div>
    <svg viewBox="0 0 16 18" className="w-4 h-[18px] mt-auto"><path d="M5 7h7l-3.500 4z" fill="#444" /></svg>
  </div>
);

/* ---------- Prompt window ---------- */

const promptButton = 'w-[74px] h-6 rounded-[3px] border text-[12px] leading-5 text-black';

const Prompt = () => (
  <div
    role="dialog"
    aria-label="The page at http://www.alkafeel.net says:"
    className="absolute left-[649px] top-[555px] w-[364px] px-1.5 pb-1.5 rounded-lg border border-[#1c1628] shadow-[0_0_12px_4px_rgba(0,0,0,0.6)] bg-gradient-to-br from-[#d9c8ea] via-[#b498d2] to-[#a284c0]"
  >
    <div className="flex items-start justify-between h-7">
      <h2 className="text-[12px] leading-7 text-black">The page at http://www.alkafeel.net says:</h2>
      <button type="button" aria-label="Close" className="w-[47px] h-[19px] flex items-center justify-center rounded-b border border-t-0 border-[#4c1420] bg-gradient-to-b from-[#e0a098] via-[#c03828] to-[#d86850]">
        <svg viewBox="0 0 12 12" className="w-3 h-3"><path d="M2 2l8 8M10 2l-8 8" stroke="#5c3030" strokeWidth="4" /><path d="M2.5 2.5l7 7M9.5 2.5l-7 7" stroke="#fff" strokeWidth="2.2" /></svg>
      </button>
    </div>
    <div className="h-[118px] px-[13px] pt-2 bg-[#f0f0f0] border border-[#4f4460]">
      <div className="flex">
        <svg viewBox="0 0 30 30" className="w-[30px] h-[30px] mt-1 shrink-0">
          <circle cx="15" cy="15" r="14" fill="#dfe3ea" stroke="#a8b0bc" />
          <circle cx="15" cy="15" r="12" fill="#1d4eb4" />
          <path d="M4 12Q7 4 15 4t11 8q-11-4-22 0z" fill="#5a8ae0" />
          <path d="M10.5 12q0-4.500 4.700-4.500t4.700 4q0 2.500-2.500 3.800-1.900 1.200-1.900 3M15.500 20.500v3.200" stroke="#fff" strokeWidth="3.2" fill="none" />
        </svg>
        <div className="flex-1 ml-[10px] flex flex-col">
          <label htmlFor="prompt" className="text-[12px] leading-[28px] pl-0.5 text-black">رجاءً أدخل عنوان الرابط للصورة:</label>
          <input
            id="prompt"
            defaultValue="ent.php?attachmentid=4336&stc=1&d=1284226271"
            className="w-[281px] h-5 mt-[12px] px-[3px] text-[12px] leading-4 text-black text-right bg-white border border-[#8fb8dc] outline-none"
          />
        </div>
      </div>
      <div className="flex gap-3 pl-[79px] mt-2.5">
        <button type="button" className={`${promptButton} border-[#3c7fb1] bg-gradient-to-b from-[#eaf6fd] via-[#cfeafa] to-[#a7d9f5]`}>OK</button>
        <button type="button" className={`${promptButton} border-[#707070] bg-gradient-to-b from-[#f2f2f2] via-[#e6e6e6] to-[#cfcfcf]`}>Cancel</button>
      </div>
    </div>
  </div>
);

const Annotations = () => (
  <>
    <p dir="rtl" className="absolute left-[616px] top-[480px] w-[92px] text-center text-[22px] leading-[30px] whitespace-nowrap text-[#f01010] font-['Liberation_Serif','DejaVu_Sans_Condensed',serif]">
      إضغط هنا
    </p>
    <svg viewBox="0 0 100 40" className="absolute left-[714px] top-[494px] w-[100px] h-10">
      <path d="M4 2l51 9V2l42 24-46 9 2-9-51-9z" fill="#ff0a0a" />
    </svg>
    <svg viewBox="0 0 40 42" className="absolute left-[795px] top-[676px] w-10 h-[42px]">
      <path d="M2 2l24 8-6 5 17 20-6 5-17-19-5 5z" fill="#ff0a0a" />
    </svg>
  </>
);

/* ---------- Taskbar ---------- */

const WordIcon = () => (
  <svg viewBox="0 0 30 30" className="w-[30px] h-[30px]">
    <path d="M6 1h22v28H1V6z" fill="#f4f8fd" stroke="#2c5ca8" strokeWidth="1.5" />
    <path d="M20 7h6M21 11h5M22 15h4" stroke="#6a94cc" strokeWidth="1.5" />
    <text x="3" y="20" fontFamily="Liberation Sans" fontSize="20" fontWeight="bold" fill="#1f58ac">W</text>
    <path d="M20 18l9 3-2 9-7-2z" fill="#fff" stroke="#88a8d0" />
  </svg>
);

const LetterIcon = ({ text, box, ink }) => (
  <span className={`w-[29px] h-[29px] flex items-center justify-center border font-bold text-[14px] font-['Open_Sans',sans-serif] ${box} ${ink}`}>
    {text}
  </span>
);

const taskItems = [
  {
    name: 'Media Player',
    open: true,
    icon: (
      <svg viewBox="0 0 28 28" className="w-7 h-7">
        <path d="M6 2l18 2v22l-3 1z" fill="#7fb4d8" />
        <path d="M2 2h18v25H2z" fill="#a8d4ec" stroke="#5c94bc" />
        <circle cx="11" cy="15" r="8.5" fill="#f08020" stroke="#fff" />
        <path d="M8 10l8 5-8 5z" fill="#fff" />
      </svg>
    ),
  },
  {
    name: 'Display',
    icon: (
      <svg viewBox="0 0 32 32" className="w-8 h-8">
        <path d="M14 26l10-3 6 5-10 3z" fill="#d8d8d8" stroke="#999" strokeWidth="0.6" />
        <path d="M8 1l22 2v20L8 20z" fill="#e0e0e0" stroke="#888" />
        <path d="M10 3l18 2v15l-18-2z" fill="#2440b8" />
        <path d="M18 4l10 1v10q-8-2-10-11z" fill="#6c88e0" />
        <path d="M1 11l16 2v13L1 23z" fill="#f08024" stroke="#eee" strokeWidth="1.5" />
      </svg>
    ),
  },
  { name: 'Word', open: true, icon: <WordIcon /> },
  { name: 'InDesign', icon: <LetterIcon text="ID" box="bg-[#6e1440] border-[#8c3460]" ink="text-[#f090c0]" /> },
  { name: 'Illustrator', icon: <LetterIcon text="Ai" box="bg-[#f0a428] border-[#f8c860]" ink="text-[#3c2404]" /> },
  { name: 'Photoshop', open: true, icon: <LetterIcon text="Ps" box="bg-[#1f5298] border-[#3c70b8]" ink="text-[#d8ecfc]" /> },
  {
    name: 'Wincmd',
    icon: (
      <svg viewBox="0 0 30 32" className="w-[30px] h-8">
        <path d="M0 1h30v30H0z" fill="#12488c" />
        <path d="M0 1h30v10Q15 12 0 20z" fill="#2f78bc" />
        <text x="4" y="25" fontFamily="Liberation Sans" fontSize="23" fontWeight="bold" fontStyle="italic" fill="#fff" stroke="#fff">W</text>
      </svg>
    ),
  },
  {
    name: 'Opera',
    open: true,
    icon: (
      <svg viewBox="0 0 32 32" className="w-8 h-8">
        <path d="M16 1a15 15 0 1 0 .01 30A15 15 0 0 0 16 1zm0 3.500c3 0 4.500 5 4.500 11.500S19 27.500 16 27.500 11.500 22 11.500 16 13 4.500 16 4.500z" fill="#dc1c20" fillRule="evenodd" />
        <path d="M5 8q4-6 10-6-5 5-5 13-4-2-5-7z" fill="#f47870" />
      </svg>
    ),
  },
  {
    name: 'Internet Explorer',
    open: true,
    icon: (
      <svg viewBox="0 0 32 32" className="w-8 h-8" fill="none">
        <path d="M25.5 21A9.500 9.500 0 1 1 26 16.500H9" stroke="#1c64b4" strokeWidth="5.5" />
        <path d="M9 14q2-6 8-6t8 5" stroke="#6cc0f0" strokeWidth="2" />
        <path d="M3 30Q-1 24 10 12T29 2q4 3-2 9 2-6-2-6-6 1-14 9.500T4 28z" fill="#f4c430" />
      </svg>
    ),
  },
  { name: 'Firefox', active: true, icon: <FirefoxIcon className="w-8 h-8" /> },
  {
    name: 'Viewer',
    icon: (
      <svg viewBox="0 0 32 32" className="w-8 h-8">
        <rect width="32" height="32" rx="2" fill="#14184c" />
        <path d="M14 1h17v30H14z" fill="#fff" />
        <path d="M1 11h8l8 17-2 3h-4z" fill="#fff" />
        <path d="M17 28l7-18h7L20 31h-5z" fill="#14184c" />
        <circle cx="16" cy="7" r="6" fill="#c82448" />
        <circle cx="14" cy="5" r="2" fill="#f07890" />
      </svg>
    ),
  },
  {
    name: 'Kaspersky',
    open: true,
    icon: (
      <svg viewBox="0 0 32 32" className="w-8 h-8">
        <path d="M1 1h11v12L21 1h11L19 17l4 4 9-6v16H18l-5-6-7 6H1z" fill="#fff" stroke="#fff" />
        <path d="M3 3h7v14L21 3h7L10 24l-7 5z" fill="#d8281c" />
        <path d="M3 3h7v10H3zM21 3h7l-6 7h-6z" fill="#f08880" />
        <path d="M30 19v10H20l-4-4 6-2z" fill="#111" />
      </svg>
    ),
  },
  {
    name: 'Explorer',
    open: true,
    icon: (
      <svg viewBox="0 0 32 32" className="w-8 h-8">
        <path d="M2 4h13l2 3h13v22H2z" fill="#ecd27c" stroke="#b89c44" />
        <path d="M4 9h26v20H2z" fill="#f8eaa4" stroke="#c8ac54" />
        <path d="M5 3h4v3H5z" fill="#2ca03c" />
        <path d="M14 5h4v3h-4z" fill="#d04828" />
        <path d="M21 7h5v3h-5z" fill="#3080c8" />
        <path d="M6 19h20v12h-5v-7H11v7H6z" fill="#8cc8ec" stroke="#5898c4" />
      </svg>
    ),
  },
];

const Taskbar = () => (
  <footer className="flex items-stretch h-10 shrink-0 pl-[2px] border-t border-[#3c2c48] bg-[linear-gradient(90deg,#2a1030_0%,#3c1a44_3%,#8a3c80_7%,#b060a8_11%,#8c4488_15%,#9c74b8_18%,#a37ec0_28%,#94509c_34%,#9c60a4_39%,#7a4a78_43%,#6c6068_47%,#5c5850_52%,#585450_58%,#84707c_61%,#7c6488_64%,#8c6878_67%,#7c3c60_70%,#443044_73%,#242230_77%,#2c2438_86%,#7c3860_90%,#78305c_94%,#5c2450_97%,#3c1c34_100%)]">
    <button type="button" aria-label="Start" className="w-[50px] mr-2 flex items-center justify-center">
      <svg viewBox="0 0 38 38" className="w-[38px] h-[38px]">
        <circle cx="19" cy="19" r="18" fill="#1c5c94" stroke="#7cb4d8" />
        <path d="M3 14Q7 2 19 2t16 12q-16 5-32 0z" fill="#9cb8cc" opacity="0.7" />
        <path d="M6 28q13-6 26 0-5 8-13 8T6 28z" fill="#40d0f4" />
        <path d="M10 11q4-3 8-1l-1.500 8q-4-2-8 1z" fill="#f05c28" />
        <path d="M19.500 11q4 2 9 0l-1.500 8q-5 2-9 0z" fill="#8cc83c" />
        <path d="M8 20.500q4-3 8-1l-1.500 8q-4-2-8 1z" fill="#48a4e8" />
        <path d="M17.500 20.500q4 2 9 0l-1.500 8q-5 2-9 0z" fill="#fcc828" />
      </svg>
    </button>
    {taskItems.map((item) => (
      <button
        key={item.name}
        type="button"
        aria-label={item.name}
        className={`w-[58px] mr-1 flex items-center justify-center rounded-[3px] border ${
          item.active
            ? 'border-white/80 bg-white/60'
            : item.open
              ? 'border-white/60 bg-gradient-to-br from-white/55 to-white/15'
              : 'border-transparent'
        }`}
      >
        {item.icon}
      </button>
    ))}
    <div className="ml-auto flex items-center text-white text-[12px]">
      <span>AR</span>
      <svg viewBox="0 0 8 5" className="w-2 h-[5px] ml-4"><path d="M0 5h8L4 0z" fill="#fff" /></svg>
      <svg viewBox="0 0 16 16" className="w-4 h-4 ml-4">
        <path d="M2 1v14" stroke="#fff" strokeWidth="1.5" />
        <path d="M3 2h5l1 1h5v6H9L8 8H3z" fill="#fff" />
        <circle cx="11" cy="11" r="4.8" fill="#d83020" />
        <path d="M9 9l4 4M13 9l-4 4" stroke="#fff" strokeWidth="1.5" />
      </svg>
      <svg viewBox="0 0 16 16" className="w-4 h-4 ml-2" fill="none">
        <path d="M5 4h10v8H5zM7 15h7M10.5 12v3M2.500 1v4M1 2v3h4V2M3 5v9h4" stroke="#fff" strokeWidth="1.3" />
      </svg>
      <svg viewBox="0 0 16 16" className="w-4 h-4 ml-2" fill="none">
        <path d="M1 5.500h3L8 2v12l-4-3.500H1z" fill="#fff" />
        <path d="M10 5.500q2 2.500 0 5M12 4q3 4 0 8M14 2.500q4 5.500 0 11" stroke="#fff" />
      </svg>
      <div className="w-[88px] text-center leading-4">
        <p>08:34 م</p>
        <p>٢٠١٠/٠٩/١١</p>
      </div>
    </div>
    <button type="button" aria-label="Show desktop" className="w-[13px] mr-px border border-white/40 bg-white/20" />
  </footer>
);

const App = () => {
  return (
    <div className="relative h-screen flex flex-col overflow-hidden bg-white font-['Roboto','DejaVu_Sans_Condensed',sans-serif]">
      <TitleBar />
      <div className="shrink-0 bg-[linear-gradient(180deg,#fdfdff_0px,#e4e8f4_8px,#d3daec_12px,#d3daec_100%)]">
        <div className="flex items-center gap-3 h-5 pl-1.5 text-[12px] leading-5 text-[#8c8e98]">
          {menus.map((menu) => (
            <button key={menu} type="button">
              <span className="underline">{menu[0]}</span>
              {menu.slice(1)}
            </button>
          ))}
        </div>
        <NavigationBar />
        <BookmarksBar />
        <TabStrip />
      </div>

      <main className="flex-1 min-h-0 flex bg-white">
        <div className="flex-1 min-w-0 overflow-hidden font-['DejaVu_Sans',sans-serif]" dir="rtl">
          <div className="w-4/5 min-h-full mx-auto px-[15px] bg-[#eff8ff]">
            <Breadcrumb />
            <ForumNav />
            <LatestPosts />
            <Preview />
            <ReplyForm />
            <Panel className="mt-4">
              <PanelHeader title="الخيارات الإضافية">
                <button type="button" aria-label="طي">
                  <svg viewBox="0 0 11 11" className="w-[11px] h-[11px] block"><rect x="0.5" y="0.5" width="10" height="10" fill="#9cc8cc" stroke="#e8f8f8" /><path d="M3 3h5v5H3z" fill="#204858" /></svg>
                </button>
              </PanelHeader>
            </Panel>
          </div>
        </div>
        <Scrollbar />
      </main>

      <div role="status" className="h-[22px] shrink-0 pl-1.5 border-t border-[#8c8a88] bg-[#f0eeec] text-[12px] leading-5 text-black">
        Done
      </div>
      <Taskbar />

      <Prompt />
      <Annotations />
    </div>
  );
};

export default App;
